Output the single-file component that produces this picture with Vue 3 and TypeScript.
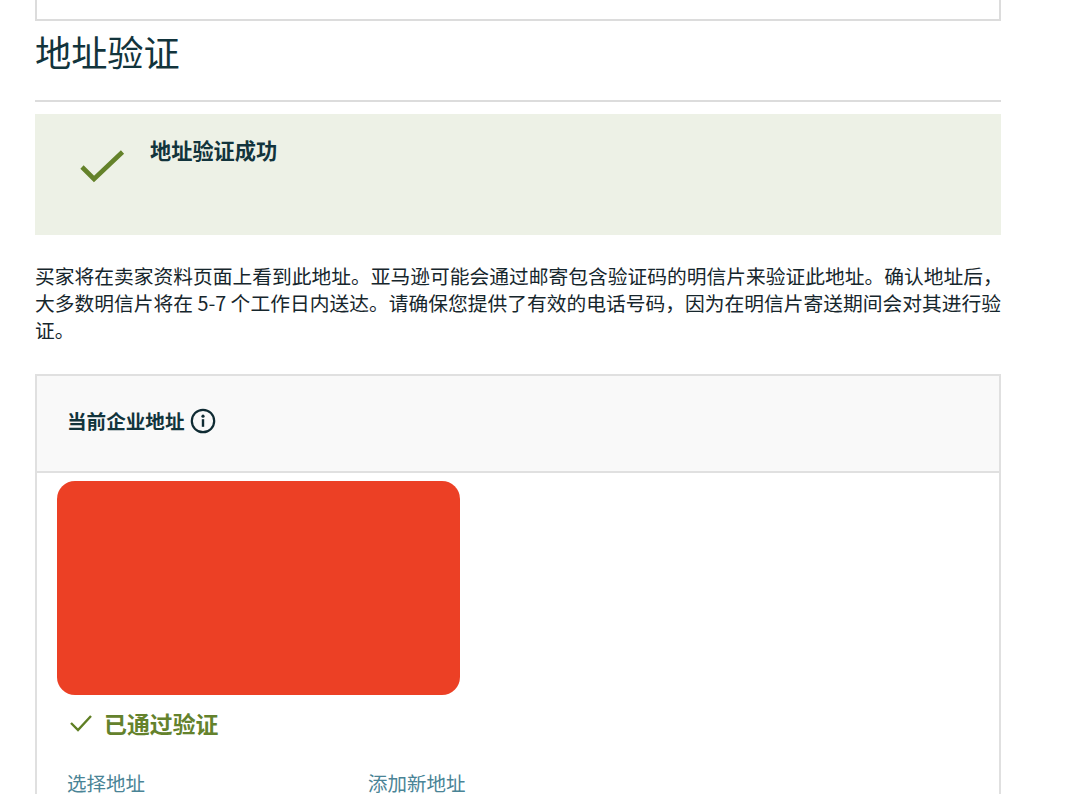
<script setup lang="ts">
const lines: string[] = [
  '买家将在卖家资料页面上看到此地址。亚马逊可能会通过邮寄包含验证码的明信片来验证此地址。确认地址后，',
  '大多数明信片将在 5-7 个工作日内送达。请确保您提供了有效的电话号码，因为在明信片寄送期间会对其进行验',
  '证。',
]
</script>

<template>
  <div class="page">
    <div class="top-card"></div>
    <h1 class="title">地址验证</h1>
    <div class="banner">
      <svg class="banner-check" width="46" height="36" viewBox="0 0 46 36" aria-hidden="true">
        <path d="M3 18 L15 30 L43.5 3" fill="none" stroke="#64822a" stroke-width="4.6" />
      </svg>
      <div class="banner-text">地址验证成功</div>
    </div>
    <p class="desc">
      <span v-for="line in lines" :key="line" class="desc-line">{{ line }}</span>
    </p>
    <section class="card">
      <header class="card-head">
        <span class="card-title">当前企业地址</span>
        <svg width="26" height="26" viewBox="0 0 26 26" aria-hidden="true">
          <circle cx="13" cy="13" r="11.2" fill="none" stroke="#0f2b33" stroke-width="2.2" />
          <circle cx="13" cy="8.2" r="1.6" fill="#0f2b33" />
          <rect x="11.8" y="11.2" width="2.4" height="7.6" fill="#0f2b33" />
        </svg>
      </header>
      <div class="card-body">
        <div class="redacted"></div>
        <div class="verified">
          <svg width="24" height="18" viewBox="0 0 24 18" aria-hidden="true">
            <path d="M2 9 L9 16 L22 2" fill="none" stroke="#5f7f24" stroke-width="2.4" />
          </svg>
          <span>已通过验证</span>
        </div>
        <div class="links">
          <a class="link">选择地址</a>
          <a class="link">添加新地址</a>
        </div>
      </div>
    </section>
  </div>
</template>

<style>
html, body { margin: 0; background: #fff; overflow: hidden; }
</style>

<style scoped>
.page {
  width: 966px;
  margin-left: 35px;
  font-family: "Noto Sans CJK SC", "Liberation Sans", sans-serif;
  color: #0f2b33;
}
.top-card {
  height: 21px;
  box-sizing: border-box;
  border-style: solid;
  border-width: 0 2px 2px 2px;
  border-color: #dcdcdc;
  background: #fff;
}
.title {
  margin: 0;
  height: 81px;
  box-sizing: border-box;
  border-bottom: 2px solid #dcdcdc;
  padding-top: 5px;
  font-size: 36.2px;
  line-height: 50px;
  font-weight: 400;
  color: #12343c;
}
.banner {
  margin-top: 12px;
  height: 121px;
  background: #edf1e6;
  display: flex;
  align-items: flex-start;
  box-sizing: border-box;
  padding: 35px 0 0 44px;
}
.banner-check { flex: none; }
.banner-text {
  margin: -15px 0 0 25px;
  font-size: 21.2px;
  line-height: 32px;
  font-weight: 700;
  color: #12343c;
}
.desc {
  margin: 27px 0 0;
  width: 980px;
  font-size: 19.75px;
  line-height: 27px;
  color: #16262c;
}
.desc-line { display: block; white-space: nowrap; }
.card {
  margin-top: 31px;
  border: 2px solid #e0e0e0;
  border-bottom: 0;
  height: 440px;
  box-sizing: border-box;
}
.card-head {
  height: 97px;
  box-sizing: border-box;
  background: #f9f9f9;
  border-bottom: 2px solid #e0e0e0;
  display: flex;
  align-items: center;
  gap: 5px;
  padding: 0 0 6px 30px;
}
.card-title {
  font-size: 19.6px;
  font-weight: 700;
  color: #12343c;
}
.card-body {
  padding: 8px 0 0 20px;
}
.redacted {
  width: 403px;
  height: 214px;
  background: #ec4025;
  border-radius: 18px;
}
.verified {
  display: flex;
  align-items: center;
  gap: 11px;
  margin: 12px 0 0 12px;
  height: 32px;
  font-size: 22.9px;
  font-weight: 700;
  color: #64822c;
}
.links {
  display: flex;
  margin: 33px 0 0 10px;
}
.link {
  width: 301px;
  font-size: 19.5px;
  line-height: 22px;
  color: #4a8496;
}
</style>
